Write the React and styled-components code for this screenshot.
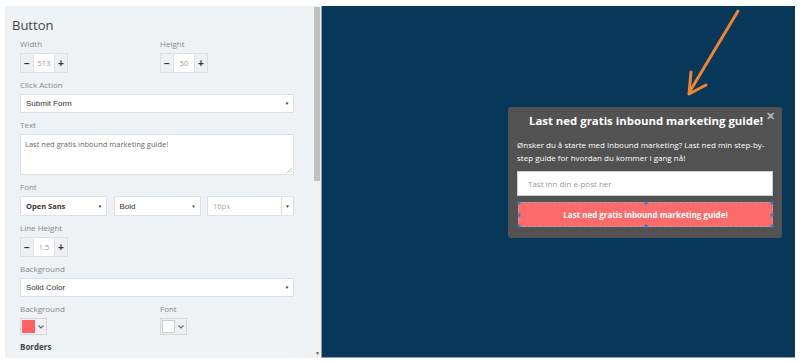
import React from "react";
import styled, { createGlobalStyle } from "styled-components";

const Global = createGlobalStyle`
  html, body { margin: 0; padding: 0; background: #fff; }
  body { font-family: "Open Sans", "Liberation Sans", sans-serif; }
  * { box-sizing: border-box; }
`;

const Page = styled.div`
  display: flex;
  height: 362px;
  padding: 6px 5px 4px 5px;
  background: #fff;
`;

const Sidebar = styled.div`
  width: 308px;
  background: #eef2f5;
  overflow: hidden;
  padding: 9px 0 0 7px;
`;

const Heading = styled.div`
  font-size: 13px;
  line-height: 20px;
  color: #444;
  margin-bottom: 2px;
`;

const Fields = styled.div`
  padding-left: 8px;
  width: 282px;
  display: flex;
  flex-direction: column;
`;

const Row = styled.div`
  display: flex;
  gap: ${(p) => p.$gap || 0}px;
`;

const Col = styled.div`
  width: ${(p) => p.$w}px;
  flex-shrink: 0;
  display: flex;
  flex-direction: column;
`;

const Label = styled.div`
  font-size: 8px;
  line-height: 14px;
  color: ${(p) => (p.$bold ? "#444" : "#888")};
  font-weight: ${(p) => (p.$bold ? 700 : 400)};
  margin-bottom: 2px;
  white-space: nowrap;
`;

const Group = styled.div`
  margin-bottom: 5px;
`;

const Stepper = styled.div`
  display: flex;
  height: 20px;
  width: 48px;
  border: 1px solid #dde1e5;
  background: #eef0f2;
`;

const StepBtn = styled.div`
  width: 12px;
  display: flex;
  align-items: center;
  justify-content: center;
  font-family: "Liberation Sans", sans-serif;
  font-weight: 700;
  font-size: 10px;
  color: #333;
`;

const StepVal = styled.div`
  flex: 1;
  background: #fff;
  border-left: 1px solid #dde1e5;
  border-right: 1px solid #dde1e5;
  display: flex;
  align-items: center;
  justify-content: center;
  font-size: 7.5px;
  color: #999;
`;

const Select = styled.div`
  display: flex;
  align-items: center;
  height: ${(p) => p.$h || 19}px;
  width: ${(p) => (p.$w ? p.$w + "px" : "100%")};
  background: #fff;
  border: 1px solid #dde1e5;
  padding-left: 5px;
  font-family: ${(p) => (p.$open ? '"Open Sans"' : '"Liberation Sans"')}, sans-serif;
  font-weight: ${(p) => (p.$bold ? 700 : 400)};
  font-size: ${(p) => (p.$open ? 7.5 : 8)}px;
  color: ${(p) => (p.$muted ? "#aaa" : "#333")};
`;

const SelText = styled.div`
  flex: 1;
`;

const Caret = styled.div`
  width: 12px;
  height: 100%;
  display: flex;
  align-items: center;
  justify-content: center;
  font-size: 4.5px;
  color: #333;
  border-left: ${(p) => (p.$split ? "1px solid #dde1e5" : "none")};
`;

const TextArea = styled.div`
  position: relative;
  height: 41px;
  background: #fff;
  border: 1px solid #dde1e5;
  padding: 4px 4px;
  font-size: 7.5px;
  line-height: 11px;
  color: #666;
`;

const Grip = styled.svg`
  position: absolute;
  right: 1px;
  bottom: 1px;
`;

const Swatch = styled.div`
  display: flex;
  align-items: center;
  width: 27px;
  height: 17px;
  border: 1px solid #d4d8dc;
  background: #eef0f2;
  padding-left: 1px;
`;

const Chip = styled.div`
  width: 13px;
  height: 13px;
  background: ${(p) => p.$c};
  border: 1px solid ${(p) => (p.$c === "#fff" ? "#ccc" : p.$c)};
`;

const Chev = styled.div`
  flex: 1;
  display: flex;
  justify-content: center;
  color: #667;
`;

const Track = styled.div`
  position: relative;
  width: 9px;
  background: #f1f1f1;
  border-right: 1px solid #999;
  padding: 1px 1px 0 1px;
`;

const Thumb = styled.div`
  height: 174px;
  background: #c1c1c1;
`;

const DownArrow = styled.div`
  position: absolute;
  bottom: 2px;
  left: 2px;
  font-size: 5px;
  color: #555;
`;

const Canvas = styled.div`
  position: relative;
  flex: 1;
  background: #073859;
  display: flex;
  justify-content: flex-end;
  align-items: flex-start;
  padding: 101px 13px 0 0;
  border-bottom: 1px solid #8aa0b8;
`;

const Arrow = styled.svg`
  position: absolute;
  left: 360px;
  top: 0;
`;

const Popup = styled.div`
  position: relative;
  width: 274px;
  background: #525252;
  border-radius: 3px;
  padding: 5px 9px 11px 9px;
  display: flex;
  flex-direction: column;
`;

const Title = styled.div`
  text-align: center;
  color: #fff;
  font-weight: 700;
  font-size: 11.4px;
  line-height: 17px;
  padding-left: 2px;
`;

const Close = styled.div`
  position: absolute;
  right: 7px;
  top: 3px;
  color: #b8b8b8;
  font-family: "Liberation Sans", sans-serif;
  font-weight: 700;
  font-size: 11px;
`;

const Body = styled.div`
  color: #fff;
  font-size: 8px;
  line-height: 13px;
  margin: 9px 0 7px 0;
`;

const Input = styled.div`
  height: 25px;
  background: #fff;
  border: 1px solid #ccc;
  display: flex;
  align-items: center;
  padding-left: 10px;
  font-size: 8px;
  color: #999;
  margin-bottom: 6px;
`;

const CTA = styled.div`
  position: relative;
  height: 25px;
  margin-left: 1px;
  background: #ff6b6b;
  border: 1px dashed #9ab;
  display: flex;
  align-items: center;
  justify-content: center;
  color: #fff;
  font-weight: 700;
  font-size: 8px;
`;

const Handle = styled.div`
  position: absolute;
  width: 3px;
  height: 3px;
  background: #2d7fd0;
  left: ${(p) => p.$x};
  top: ${(p) => p.$y};
  transform: translate(-50%, -50%);
`;

function Step({ v }) {
  return (
    <Stepper>
      <StepBtn>−</StepBtn>
      <StepVal>{v}</StepVal>
      <StepBtn>+</StepBtn>
    </Stepper>
  );
}

function Chevron() {
  return (
    <Chev>
      <svg width="6" height="4" viewBox="0 0 6 4">
        <path d="M0.5 0.5 L3 3 L5.5 0.5" fill="none" stroke="#667" strokeWidth="1.1" />
      </svg>
    </Chev>
  );
}

export default function App() {
  const handles = [
    ["0%", "0%"], ["50%", "0%"], ["100%", "0%"],
    ["0%", "50%"], ["100%", "50%"],
    ["0%", "100%"], ["50%", "100%"], ["100%", "100%"],
  ];
  return (
    <>
      <Global />
      <Page>
        <Sidebar>
          <Heading>Button</Heading>
          <Fields>
            <Group>
              <Row>
                <Col $w={140}>
                  <Label>Width</Label>
                  <Step v="513" />
                </Col>
                <Col $w={134}>
                  <Label>Height</Label>
                  <Step v="50" />
                </Col>
              </Row>
            </Group>
            <Group>
              <Label>Click Action</Label>
              <Select>
                <SelText>Submit Form</SelText>
                <Caret>▼</Caret>
              </Select>
            </Group>
            <Group>
              <Label>Text</Label>
              <TextArea>
                Last ned gratis inbound marketing guide!
                <Grip width="5" height="5" viewBox="0 0 5 5">
                  <path d="M5 0 L0 5 M5 2.5 L2.5 5" stroke="#aaa" strokeWidth="0.6" />
                </Grip>
              </TextArea>
            </Group>
            <Group>
              <Label>Font</Label>
              <Row $gap={6.5}>
                <Select $w={87} $h={20} $open $bold>
                  <SelText>Open Sans</SelText>
                  <Caret>▼</Caret>
                </Select>
                <Select $w={87} $h={20}>
                  <SelText>Bold</SelText>
                  <Caret>▼</Caret>
                </Select>
                <Select $w={87} $h={20} $open $muted>
                  <SelText>16px</SelText>
                  <Caret $split>▼</Caret>
                </Select>
              </Row>
            </Group>
            <Group>
              <Label>Line Height</Label>
              <Step v="1.5" />
            </Group>
            <Group>
              <Label>Background</Label>
              <Select>
                <SelText>Solid Color</SelText>
                <Caret>▼</Caret>
              </Select>
            </Group>
            <Group>
              <Row>
                <Col $w={140}>
                  <Label>Background</Label>
                  <Swatch>
                    <Chip $c="#ff6161" />
                    <Chevron />
                  </Swatch>
                </Col>
                <Col $w={134}>
                  <Label>Font</Label>
                  <Swatch>
                    <Chip $c="#fff" />
                    <Chevron />
                  </Swatch>
                </Col>
              </Row>
            </Group>
            <Label $bold>Borders</Label>
            <Row>
              <Col $w={70}><Label>Top</Label></Col>
              <Col $w={70}><Label>Left</Label></Col>
              <Col $w={70}><Label>Bottom</Label></Col>
              <Col $w={64}><Label>Right</Label></Col>
            </Row>
          </Fields>
        </Sidebar>
        <Track>
          <Thumb />
          <DownArrow>▼</DownArrow>
        </Track>
        <Canvas>
          <Arrow width="60" height="95" viewBox="0 0 60 95">
            <g stroke="#f08231" strokeWidth="3" strokeLinecap="round" fill="none">
              <path d="M56 5 L7.5 86" />
              <path d="M9 66 L7 88 L24 79" strokeLinejoin="round" />
            </g>
          </Arrow>
          <Popup>
            <Close>✕</Close>
            <Title>Last ned gratis inbound marketing guide!</Title>
            <Body>
              Ønsker du å starte med Inbound marketing? Last ned min step-by-step guide for hvordan du kommer i gang nå!
            </Body>
            <Input>Tast inn din e-post her</Input>
            <CTA>
              Last ned gratis inbound marketing guide!
              {handles.map(([x, y], i) => (
                <Handle key={i} $x={x} $y={y} />
              ))}
            </CTA>
          </Popup>
        </Canvas>
      </Page>
    </>
  );
}
